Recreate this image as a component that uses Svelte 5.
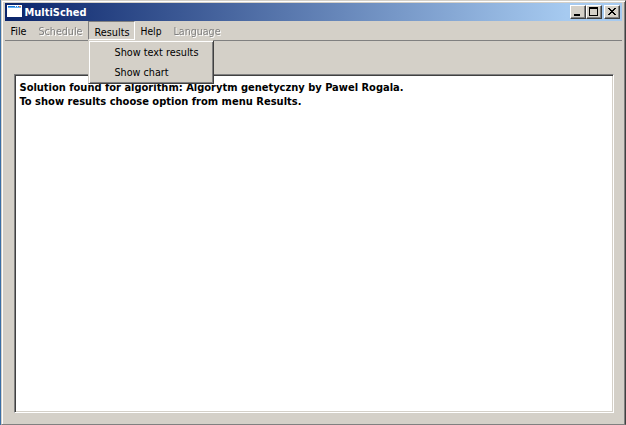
<script>
  const menus = [
    { label: 'File', w: 16 },
    { label: 'Schedule', w: 44, off: true },
    { label: 'Results', w: 35, open: true },
    { label: 'Help', w: 21 },
    { label: 'Language', w: 47, off: true }
  ];
  const options = [{ label: 'Show text results', w: 84 }, { label: 'Show chart', w: 54 }];
  const lines = [
    { label: 'Solution found for algorithm: Algorytm genetyczny by Pawel Rogala.', w: 384 },
    { label: 'To show results choose option from menu Results.', w: 282 }
  ];
</script>

{#snippet label(text, w)}
  <svg class="label" width={w} height="14"><text x="0.5" y="11" textLength={w} lengthAdjust="spacingAndGlyphs">{text}</text></svg>
{/snippet}

<div class="desktop">
  <main class="window">
    <header>
      <svg class="app" width="15" height="12" shape-rendering="crispEdges">
        <path fill="#fff" d="M0 0h15v12H0z" /><path fill="#1778d8" d="M1 1h13v1H1z" /><path fill="#64aef0" d="M1 2h13v1H1z" /><path fill="#e9f2ff" d="M8 1h1v1H8zM10 1h1v1h-1z" /><path fill="#e87840" d="M12 1h2v1h-2z" />
      </svg>
      <h1>{@render label('MultiSched', 62)}</h1>
      <div class="controls">
        <button aria-label="Minimize"><svg width="12" height="10" shape-rendering="crispEdges"><path d="M2 7h6v2H2z" /></svg></button>
        <button aria-label="Maximize"><svg width="12" height="10" shape-rendering="crispEdges"><path fill-rule="evenodd" d="M1 0h9v9H1zM2 2v6h7V2z" /></svg></button>
        <button aria-label="Close"><svg width="12" height="10" shape-rendering="crispEdges"><path d="M2 1h2v1h1v1h2V2h1V1h2v1H9v1H8v1H7v1h1v1h1v1h1v1H8V7H7V6H5v1H4v1H2V7h1V6h1V5h1V4H4V3H3V2H2z" /></svg></button>
      </div>
    </header>
    <nav>
      {#each menus as menu}
        <div class="menu" class:off={menu.off} class:open={menu.open}>
          {@render label(menu.label, menu.w)}
          {#if menu.open}
            <div class="popup">
              {#each options as option}<div class="option">{@render label(option.label, option.w)}</div>{/each}
            </div>
          {/if}
        </div>
      {/each}
    </nav>
    <section class="output">
      {#each lines as line}<p>{@render label(line.label, line.w)}</p>{/each}
    </section>
  </main>
</div>

<style>
  * { box-sizing: border-box; }
  .desktop { width: 626px; height: 425px; padding-left: 1px; background: #3a6ea5; overflow: hidden; font: 11px "DejaVu Sans Condensed", "DejaVu Sans", sans-serif; color: #000; }
  .window { display: flex; flex-direction: column; width: 625px; height: 425px; padding: 2px 2px 11px 3px; background: #d4d0c8; border: 1px solid; border-color: #d4d0c8 #404040 #808080 #d4d0c8; box-shadow: inset 1px 1px #fff, inset -1px 0 #808080; }
  .label { display: block; overflow: visible; flex: none; fill: currentColor; }
  header { display: flex; align-items: center; height: 18px; width: 617px; padding: 0 2px 0 2px; background: linear-gradient(90deg, #0a246a, #a6caf0 91%); color: #fff; }
  .app { margin-bottom: 2px; }
  h1 { margin: 0 0 0 2px; font-size: 11px; font-weight: bold; }
  .controls { display: flex; margin-left: auto; }
  button { display: block; width: 16px; height: 14px; padding: 1px; border: 1px solid; border-color: #fff #404040 #404040 #fff; background: #d4d0c8; box-shadow: inset -1px -1px #808080; }
  button:last-child { margin-left: 2px; }
  button svg { display: block; }
  nav { display: flex; width: 617px; height: 20px; border-bottom: 1px solid #808080; }
  .menu { position: relative; height: 19px; padding: 3px 6px 0; }
  .menu:first-child { padding-left: 5px; }
  .menu:nth-child(4) { padding-left: 5px; }
  .off { color: #808080; }
  .off .label { filter: drop-shadow(1px 1px 0 #fff); }
  .open { padding: 3px 5px 0; border: 1px solid; border-color: #808080 #fff #fff #808080; }
  .popup { position: absolute; z-index: 1; left: -1px; top: 18px; width: 126px; height: 44px; padding: 3px 0 0 25px; background: #d4d0c8; border: 1px solid; border-color: #d4d0c8 #404040 #404040 #d4d0c8; box-shadow: inset 1px 1px #fff, inset -1px -1px #808080; }
  .option { height: 20px; padding-top: 1px; }
  .output { flex: 1; margin: 33px 9px 0 9px; padding: 5px 4px 4px; background: #fff; border: 1px solid; border-color: #808080 #fff #fff #808080; box-shadow: inset 1px 1px #404040, inset -1px -1px #d4d0c8; font-weight: bold; }
  p { margin: 0; height: 14px; }
</style>
